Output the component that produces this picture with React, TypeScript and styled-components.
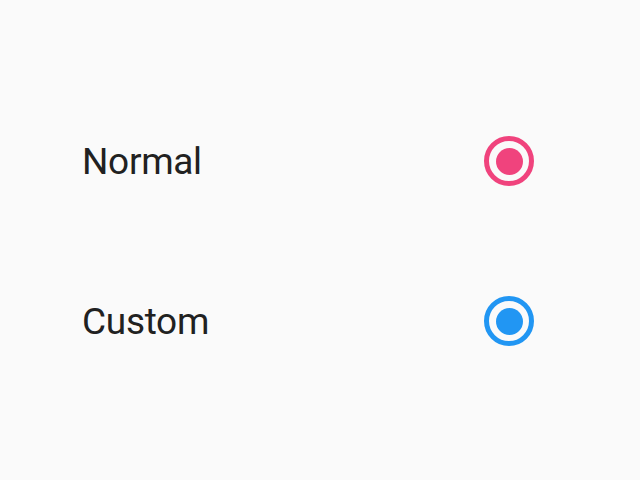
import React, { useState } from 'react';
import styled, { createGlobalStyle } from 'styled-components';

const GlobalStyle = createGlobalStyle`
  html, body {
    margin: 0;
    padding: 0;
    background: #fafafa;
  }
  body {
    font-family: Roboto, "Liberation Sans", sans-serif;
  }
`;

const options = [
  { label: 'Normal', color: '#f0437d' },
  { label: 'Custom', color: '#2196f3' },
];

export default function App() {
  const [checked] = useState([true, true]);

  return (
    <>
      <GlobalStyle />
      <Screen>
        {options.map((o, i) => (
          <Row key={o.label}>
            <Label>{o.label}</Label>
            <Radio $color={o.color} $checked={checked[i]} />
          </Row>
        ))}
      </Screen>
    </>
  );
}

const Screen = styled.div`
  width: 640px;
  height: 480px;
  box-sizing: border-box;
  padding: 81px 106px 0 82px;
  display: flex;
  flex-direction: column;
`;

const Row = styled.div`
  height: 160px;
  display: flex;
  align-items: center;
  justify-content: space-between;
`;

const Label = styled.span`
  font-size: 37px;
  color: #212121;
  letter-spacing: -0.3px;
`;

const Radio = styled.span<{ $color: string; $checked: boolean }>`
  width: 50px;
  height: 50px;
  box-sizing: border-box;
  border: 5.5px solid ${p => p.$color};
  border-radius: 50%;
  display: flex;
  align-items: center;
  justify-content: center;

  &::after {
    content: '';
    width: 27px;
    height: 27px;
    border-radius: 50%;
    background: ${p => p.$color};
    display: ${p => (p.$checked ? 'block' : 'none')};
  }
`;
